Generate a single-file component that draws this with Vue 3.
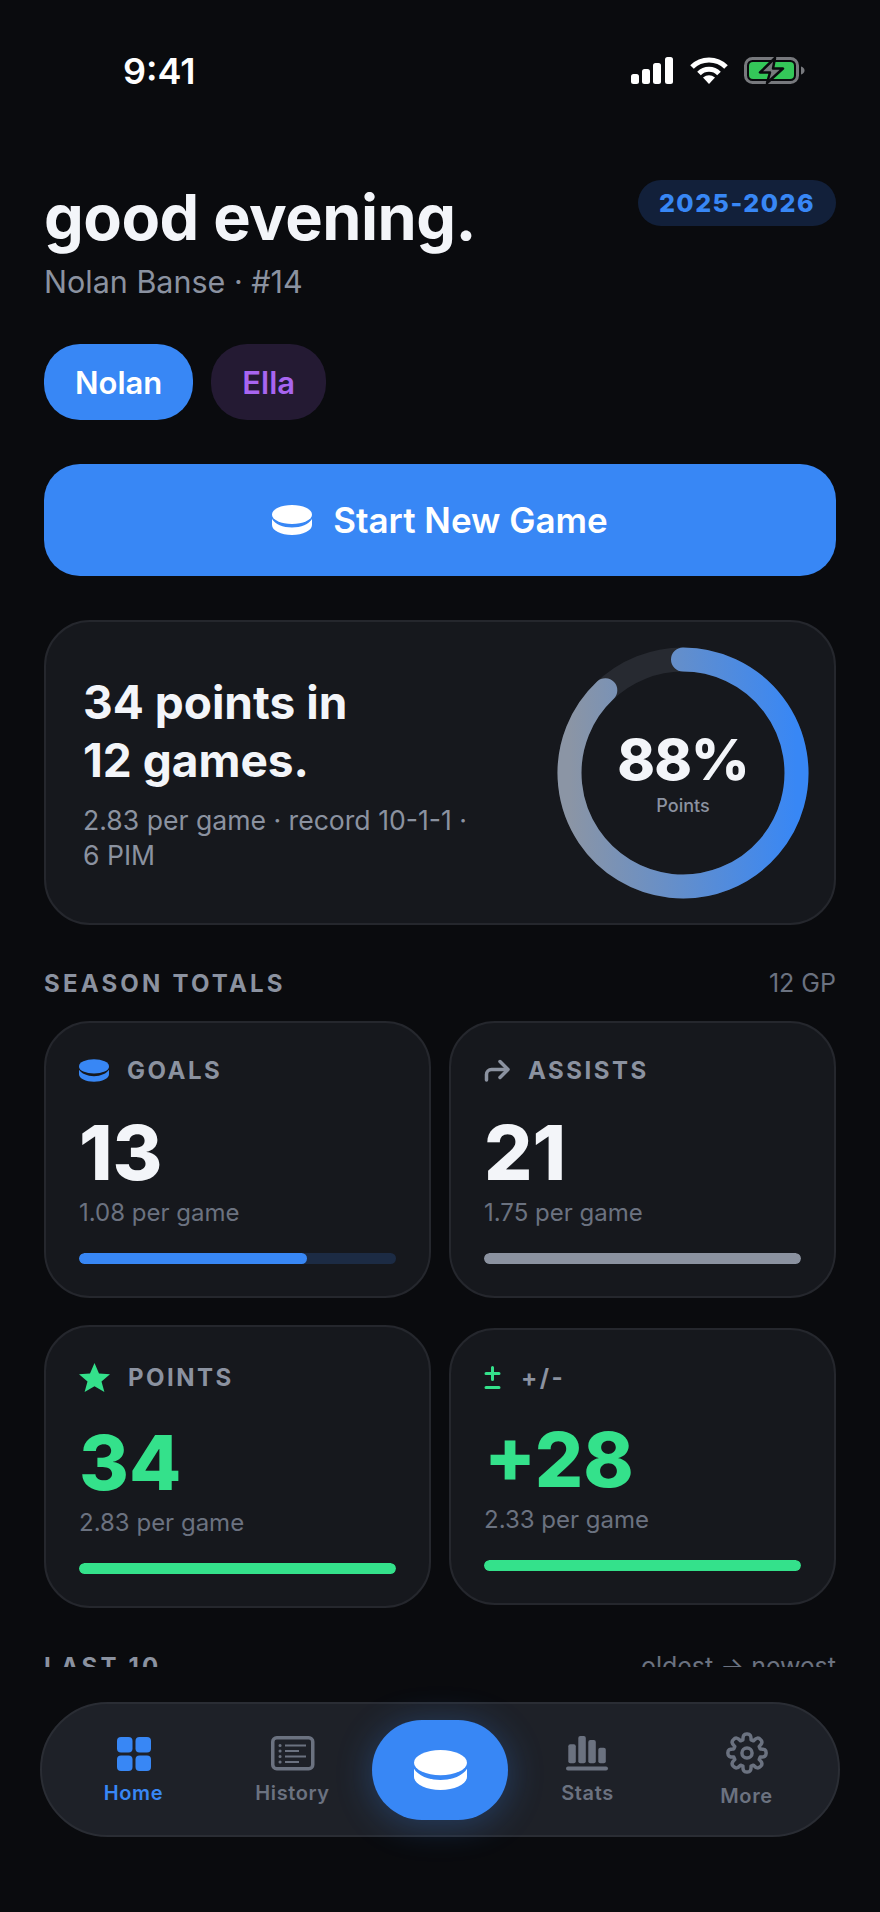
<template>
  <div class="screen">
    <div class="scroll">
      <div class="status">
        <span class="time">9:41</span>
        <div class="status-icons">
          <svg width="43" height="27" viewBox="0 0 43 27" fill="#fff">
            <rect x="0" y="17" width="8" height="10" rx="2.5" />
            <rect x="11" y="12" width="8" height="15" rx="2.5" />
            <rect x="22" y="6" width="8" height="21" rx="2.5" />
            <rect x="34" y="0" width="8" height="27" rx="2.5" />
          </svg>
          <svg width="38" height="27" viewBox="0 0 38 27" fill="none" stroke="#fff" stroke-width="5">
            <path d="M2 10A24 24 0 0 1 36 10" />
            <path d="M9 16.500A14 14 0 0 1 29 16.500" />
            <path d="M13 20.500Q19 16 25 20.500L19 27Z" fill="#fff" stroke="none" />
          </svg>
          <svg width="61" height="27" viewBox="0 0 61 27" fill="none">
            <rect x="1.500" y="1.500" width="52" height="24" rx="7" stroke="#77797d" stroke-width="3" />
            <rect x="5" y="5" width="45" height="17" rx="4" fill="#34c759" />
            <path d="M57 9.500c2 .5 3.500 2 3.500 4s-1.500 3.500-3.500 4z" fill="#77797d" />
            <path d="M31 1L16 15.500H26L23 26 39 11.500H29Z" fill="#77797d" stroke="#0a0b0e" stroke-width="2.500" stroke-linejoin="round" />
          </svg>
        </div>
      </div>

      <header class="hello">
        <div>
          <h1>good evening.</h1>
          <p>Nolan Banse · #14</p>
        </div>
        <span class="season">2025-2026</span>
      </header>

      <div class="chips">
        <button class="chip chip-on">Nolan</button>
        <button class="chip chip-ella">Ella</button>
      </div>

      <button class="start">
        <svg width="40" height="30" viewBox="0 0 40 30" fill="#fff">
          <ellipse cx="20" cy="9.500" rx="20" ry="9.500" />
          <path d="M0 14v6c0 5.500 9 10 20 10s20-4.500 20-10v-6c-3 5-11 8.500-20 8.500S3 19 0 14z" />
        </svg>
        Start New Game
      </button>

      <section class="hero">
        <div class="hero-text">
          <h2>34 points in<br />12 games.</h2>
          <p>2.83 per game · record 10-1-1 · 6 PIM</p>
        </div>
        <div class="ring">
          <svg width="252" height="252" viewBox="0 0 252 252" fill="none">
            <defs>
              <linearGradient id="ringGrad" x1="1" y1="0" x2="0" y2="0">
                <stop offset="0" stop-color="#3887f5" />
                <stop offset="1" stop-color="#8b95a5" />
              </linearGradient>
            </defs>
            <circle cx="126" cy="126" r="113.500" stroke="#272a31" stroke-width="24" />
            <path :d="ringPath" stroke="url(#ringGrad)" stroke-width="24" stroke-linecap="round" />
          </svg>
          <div class="ring-label">
            <strong>88%</strong>
            <span>Points</span>
          </div>
        </div>
      </section>

      <div class="section-head">
        <h3>SEASON TOTALS</h3>
        <span>12 GP</span>
      </div>

      <div class="grid">
        <div v-for="s in stats" :key="s.label" class="card">
          <div class="card-head">
            <svg v-if="s.icon === 'puck'" width="30" height="23" viewBox="0 0 40 30" fill="#3887f5">
              <ellipse cx="20" cy="9.500" rx="20" ry="9.500" />
              <path d="M0 14v6c0 5.500 9 10 20 10s20-4.500 20-10v-6c-3 5-11 8.500-20 8.500S3 19 0 14z" />
            </svg>
            <svg v-else-if="s.icon === 'arrow'" width="26" height="23" viewBox="0 0 26 23" fill="none" stroke="#8b92a0" stroke-width="3.500" stroke-linecap="round" stroke-linejoin="round">
              <path d="M2.500 21v-5.500a5 5 0 0 1 5-5H23" />
              <path d="M16 2.500l8 8-8 8" />
            </svg>
            <svg v-else-if="s.icon === 'star'" width="31" height="29" viewBox="0 0 31 29" fill="#34e18b">
              <path d="M15.500 0l4.500 10.500 11 .7-8.500 7.200 2.900 10.600-9.900-5.800-9.900 5.800 2.900-10.600L0 11.200l11-.7z" />
            </svg>
            <svg v-else class="plus-minus" width="17" height="23" viewBox="0 0 17 23" fill="none" stroke="#34e18b" stroke-width="3" stroke-linecap="round">
              <path d="M8.500 1.500v12M2 7.500h13M2 21.500h13" />
            </svg>
            <span>{{ s.label }}</span>
          </div>
          <div class="card-num" :class="{ green: s.green }">{{ s.value }}</div>
          <div class="card-sub">{{ s.sub }}</div>
          <div class="track" :style="{ background: s.track }">
            <div class="fill" :style="{ width: s.pct + '%', background: s.color }"></div>
          </div>
        </div>
      </div>

      <div class="section-head">
        <h3>LAST 10</h3>
        <span>oldest → newest</span>
      </div>
    </div>

    <div class="dock">
      <nav class="nav">
        <a class="tab tab-on">
          <svg width="34" height="35" viewBox="0 -1 34 35" fill="#3887f5">
            <rect width="15.500" height="15.500" rx="4" />
            <rect x="18.500" width="15.500" height="15.500" rx="4" />
            <rect y="18.500" width="15.500" height="15.500" rx="4" />
            <rect x="18.500" y="18.500" width="15.500" height="15.500" rx="4" />
          </svg>
          Home
        </a>
        <a class="tab">
          <svg width="44" height="35" viewBox="0 0 44 35" fill="none" stroke="#6b7280">
            <rect x="1.750" y="1.750" width="40" height="31" rx="4" stroke-width="3.500" />
            <path d="M14 9.500h21M14 15h14M14 20.500h21M14 26h14" stroke-width="2" />
            <path d="M9 9.500h.1M9 15h.1M9 20.500h.1M9 26h.1" stroke-width="3" stroke-linecap="round" />
          </svg>
          History
        </a>
        <button class="fab">
          <svg width="53" height="40" viewBox="0 0 40 30" fill="#fff" preserveAspectRatio="none">
            <ellipse cx="20" cy="9.500" rx="20" ry="9.500" />
            <path d="M0 14v6c0 5.500 9 10 20 10s20-4.500 20-10v-6c-3 5-11 8.500-20 8.500S3 19 0 14z" />
          </svg>
        </button>
        <a class="tab">
          <svg width="43" height="35" viewBox="0 0 43 35" fill="#6b7280">
            <rect x="2.300" y="8.300" width="7.500" height="19" rx="2" />
            <rect x="12.300" y="0" width="7.500" height="27.300" rx="2" />
            <rect x="22.300" y="4" width="7.500" height="23.300" rx="2" />
            <rect x="32.300" y="11.700" width="7.500" height="15.600" rx="2" />
            <rect y="30.500" width="42" height="4" rx="2" />
          </svg>
          Stats
        </a>
        <a class="tab tab-more">
          <svg width="42" height="42" viewBox="0 0 24 24" fill="none" stroke="#6b7280" stroke-width="2">
            <path :d="gearPath" stroke-linejoin="round" />
            <circle cx="12" cy="12" r="2.900" />
          </svg>
          More
        </a>
      </nav>
    </div>
  </div>
</template>

<script setup>
const stats = [
  { label: 'GOALS', icon: 'puck', value: '13', sub: '1.08 per game', pct: 72, color: '#3887f5', track: '#1c2b44' },
  { label: 'ASSISTS', icon: 'arrow', value: '21', sub: '1.75 per game', pct: 100, color: '#8b92a0', track: '#2a2d33' },
  { label: 'POINTS', icon: 'star', value: '34', sub: '2.83 per game', pct: 100, color: '#34e18b', track: '#16402c', green: true },
  { label: '+/-', icon: 'plusminus', value: '+28', sub: '2.33 per game', pct: 100, color: '#34e18b', track: '#16402c', green: true }
]

// ring arc: 88% of the circle, starting at 12 o'clock
const ringAngle = 0.88 * 2 * Math.PI
const ringPath = `M126 12.500A113.500 113.500 0 1 1 ${(126 + 113.5 * Math.sin(ringAngle)).toFixed(2)} ${(126 - 113.5 * Math.cos(ringAngle)).toFixed(2)}`

// 8 tooth gear, one rounded bump per tooth
const gearPath = (() => {
  const pts = []
  for (let i = 0; i < 8; i++) {
    const a = (i * Math.PI) / 4
    const at = (r, d) => {
      const b = a + d
      return `${(12 + r * Math.sin(b)).toFixed(2)} ${(12 - r * Math.cos(b)).toFixed(2)}`
    }
    pts.push(`${i === 0 ? 'M' : 'L'}${at(7.9, -0.3)}`)
    pts.push(`Q${at(11.4, -0.22)} ${at(10.9, 0)}`)
    pts.push(`Q${at(11.4, 0.22)} ${at(7.9, 0.3)}`)
  }
  return pts.join(' ') + 'Z'
})()
</script>

<style scoped>
.screen {
  width: 880px;
  height: 1912px;
  overflow: hidden;
  display: flex;
  flex-direction: column;
  background: #0a0b0e;
  color: #f3f5f9;
  font-family: Inter, 'Liberation Sans', sans-serif;
}

.scroll {
  height: 1667px;
  flex: none;
  overflow: hidden;
  padding: 0 44px;
  box-sizing: border-box;
}

.status {
  height: 141px;
  display: flex;
  align-items: center;
  justify-content: space-between;
  padding: 0 31px 0 79px;
}

.time {
  font-size: 36px;
  font-weight: 600;
  color: #fff;
}

.status-icons {
  display: flex;
  align-items: center;
  gap: 16px;
}

.hello {
  display: flex;
  justify-content: space-between;
  align-items: flex-start;
  padding-top: 39px;
}

.hello h1 {
  margin: 5px 0 0;
  font-size: 63px;
  line-height: 64px;
  font-weight: 700;
  letter-spacing: -0.5px;
}

.hello p {
  margin: 15px 0 0;
  font-size: 30.5px;
  line-height: 36px;
  color: #8b92a0;
}

.season {
  height: 46px;
  line-height: 46px;
  padding: 0 21px;
  border-radius: 23px;
  background: #12203a;
  color: #3887f5;
  font-size: 25px;
  font-weight: 800;
  letter-spacing: 1.5px;
}

.chips {
  display: flex;
  gap: 18px;
  margin-top: 44px;
}

.chip {
  height: 76px;
  border: none;
  border-radius: 36px;
  font-family: inherit;
  font-size: 31px;
  font-weight: 600;
  padding: 0 31px;
}

.chip-on {
  background: #3887f5;
  color: #fff;
}

.chip-ella {
  background: #241a33;
  color: #a865f0;
}

.start {
  width: 100%;
  height: 112px;
  margin-top: 44px;
  display: flex;
  align-items: center;
  justify-content: center;
  gap: 21px;
  border: none;
  border-radius: 36px;
  background: #3887f5;
  color: #fff;
  font-family: inherit;
  font-size: 35px;
  font-weight: 600;
}

.hero {
  margin-top: 44px;
  height: 305px;
  box-sizing: border-box;
  display: flex;
  align-items: center;
  justify-content: space-between;
  padding: 0 25px 0 37px;
  background: #16181d;
  border: 2px solid #25272d;
  border-radius: 46px;
}

.hero-text {
  width: 394px;
}

.hero h2 {
  margin: 0;
  font-size: 46px;
  line-height: 58px;
  font-weight: 700;
}

.hero p {
  margin: 14px 0 0;
  font-size: 26.6px;
  line-height: 35px;
  color: #8b92a0;
}

.ring {
  position: relative;
  width: 252px;
  height: 252px;
}

.ring svg {
  display: block;
}

.ring-label {
  position: absolute;
  inset: 0;
  display: flex;
  flex-direction: column;
  align-items: center;
  justify-content: center;
}

.ring-label strong {
  font-size: 57px;
  line-height: 62px;
  font-weight: 800;
  letter-spacing: -1px;
}

.ring-label span {
  margin-top: 4px;
  font-size: 18px;
  line-height: 22px;
  font-weight: 500;
  color: #8b92a0;
}

.section-head {
  margin-top: 44px;
  height: 28px;
  display: flex;
  justify-content: space-between;
  align-items: center;
}

.section-head h3 {
  margin: 0;
  font-size: 24px;
  font-weight: 700;
  letter-spacing: 3.2px;
  color: #8b92a0;
}

.section-head span {
  font-size: 25px;
  color: #6b7280;
}

.grid {
  margin-top: 24px;
  display: grid;
  grid-template-columns: 1fr 1fr;
  column-gap: 18px;
  row-gap: 27px;
  align-items: center;
}

.card {
  box-sizing: border-box;
  padding: 36px 33px 32px;
  background: #16181d;
  border: 2px solid #25272d;
  border-radius: 46px;
}

.card-head {
  display: flex;
  align-items: center;
  gap: 18px;
  font-size: 24px;
  font-weight: 700;
  letter-spacing: 2.5px;
  line-height: 23px;
  color: #8b92a0;
}

.plus-minus {
  margin-right: 2px;
}

.card-num {
  margin-top: 32px;
  font-size: 76px;
  line-height: 76px;
  font-weight: 800;
}

.green {
  color: #34e18b;
}

.card-sub {
  margin-top: 8px;
  font-size: 24px;
  line-height: 30px;
  color: #6b7280;
}

.track {
  margin-top: 25px;
  height: 11px;
  border-radius: 6px;
  overflow: hidden;
}

.fill {
  height: 100%;
  border-radius: 6px;
}

.dock {
  flex: 1;
  padding: 35px 40px 0;
}

.nav {
  height: 135px;
  box-sizing: border-box;
  display: flex;
  align-items: center;
  padding: 2px 12px 0;
  background: #1e2128;
  border: 2px solid #2a2d34;
  border-radius: 68px;
}

.tab {
  flex: 1;
  display: flex;
  flex-direction: column;
  align-items: center;
  gap: 9px;
  font-size: 20px;
  line-height: 26px;
  font-weight: 600;
  letter-spacing: 0.6px;
  color: #6b7280;
}

.tab-on {
  color: #3887f5;
}

.fab {
  width: 136px;
  height: 100px;
  flex: none;
  display: flex;
  align-items: center;
  justify-content: center;
  margin-top: -2px;
  border: none;
  border-radius: 50px;
  background: #3887f5;
  box-shadow: 0 4px 36px rgba(56, 135, 245, 0.3);
}
</style>

<style>
body {
  background: #0a0b0e;
}
</style>
